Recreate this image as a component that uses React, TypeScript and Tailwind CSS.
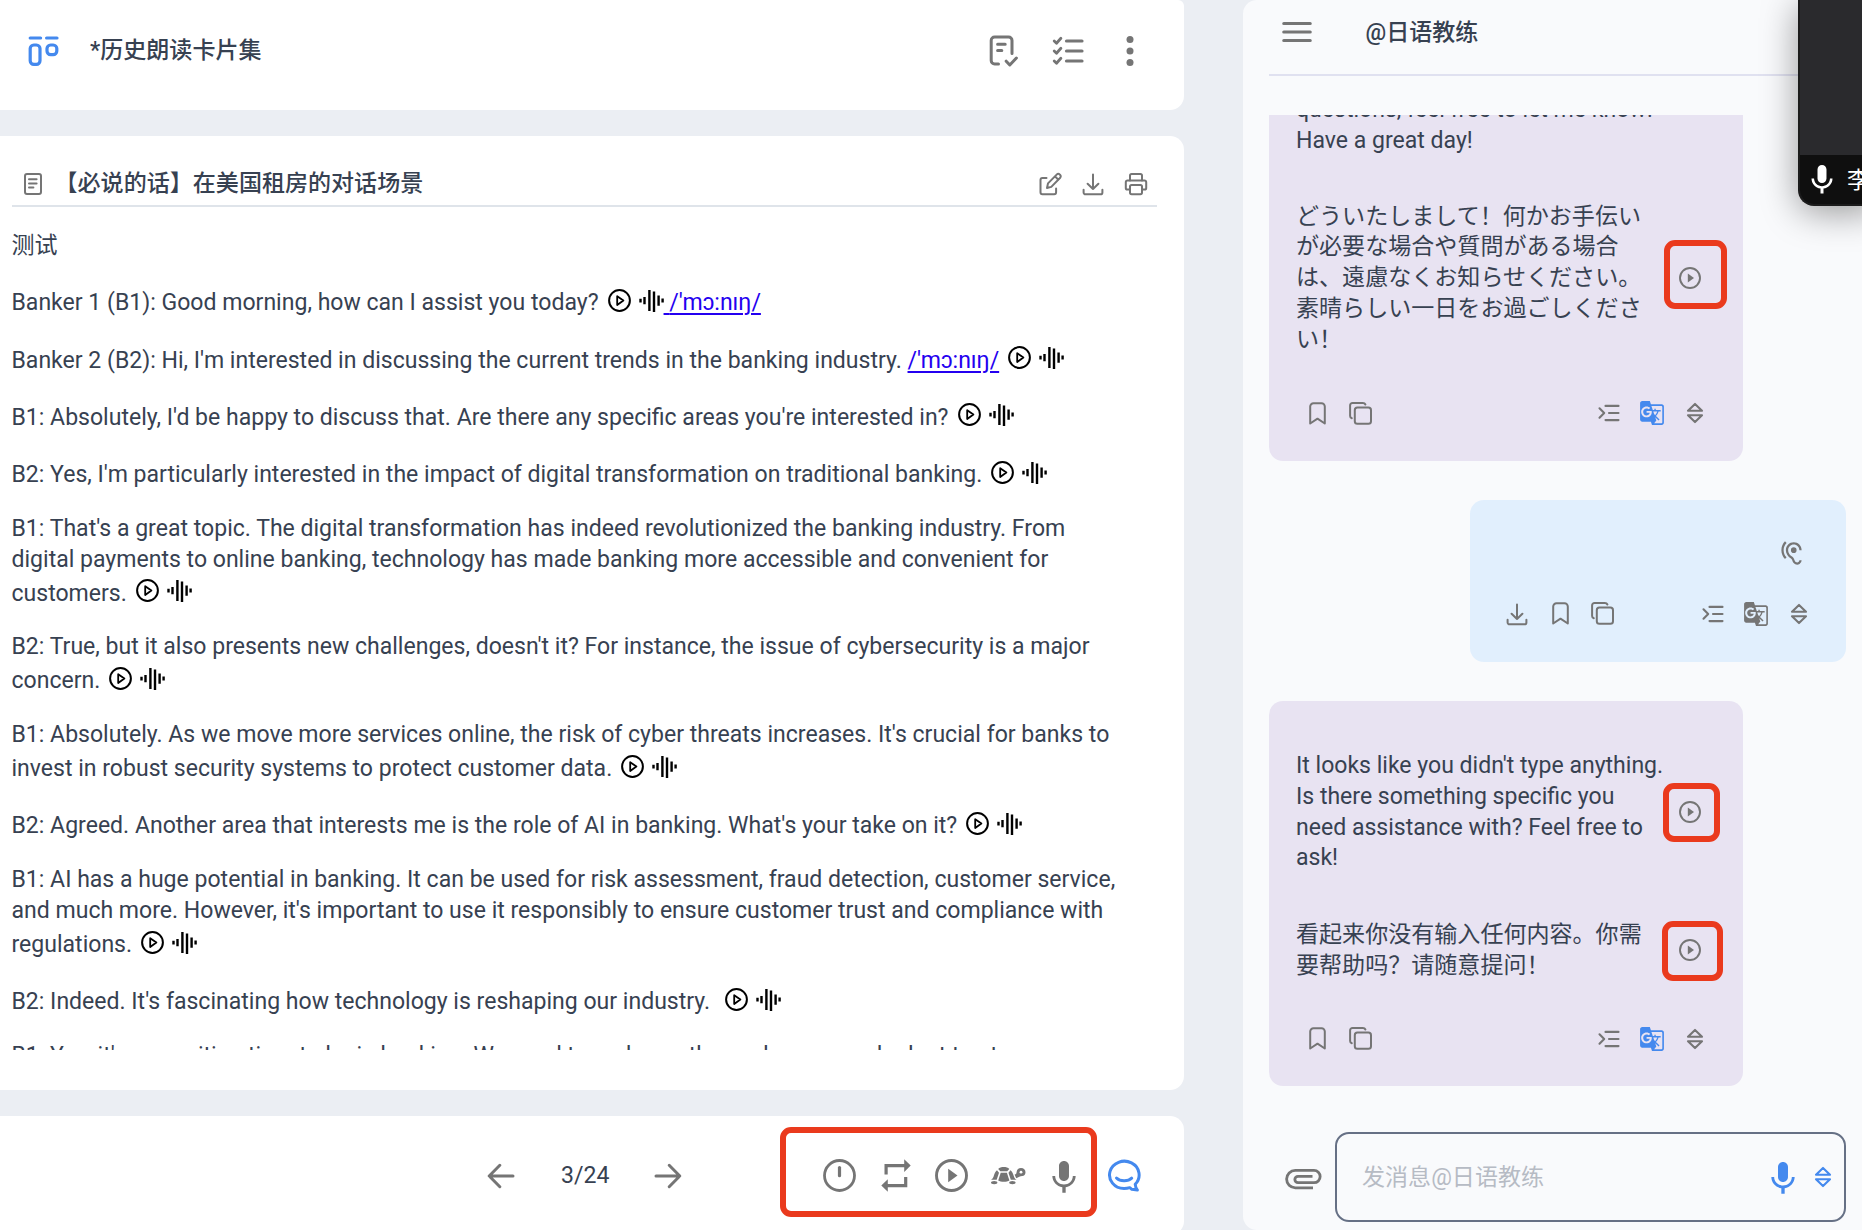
import type { ReactNode } from "react";
import { MdGTranslate, MdHearing, MdKeyboardVoice, MdMic } from "react-icons/md";

type SvgProps = { w: number; h: number; sw?: number; className?: string; children: ReactNode };

function Svg({ w, h, sw = 2, className = "", children }: SvgProps) {
  return (
    <svg
      width={w}
      height={h}
      viewBox={`0 0 ${w} ${h}`}
      fill="none"
      stroke="currentColor"
      strokeWidth={sw}
      strokeLinecap="round"
      strokeLinejoin="round"
      className={"shrink-0 " + className}
    >
      {children}
    </svg>
  );
}

const Board = () => (
  <Svg w={31} h={32} sw={3.2} className="text-[#4489ee]">
    <path d="M2.2 3H12.6M18.6 3h10.4" />
    <rect x="2.200" y="10" width="9.800" height="19.400" rx="3.600" />
    <rect x="19" y="10" width="9.800" height="9.600" rx="3.600" />
  </Svg>
);

const DocCheck = () => (
  <Svg w={30} h={32} sw={3}>
    <path d="M9.5 29H5.6a3.4 3.4 0 0 1-3.400-3.400V5.400A3.400 3.400 0 0 1 5.600 2h14a3.400 3.400 0 0 1 3.400 3.400v13.200" />
    <path d="M8.600 9.200h7.600M8.600 15.600h4.200" />
    <path d="M17.200 26.200l3.600 3.800 6.600-7" />
  </Svg>
);

const Checklist = () => (
  <Svg w={32} h={30} sw={3.2}>
    {[5, 15, 25].map((y) => (
      <g key={y}>
        <path d={`M14.5 ${y}H30`} />
        <path d={`M2.2 ${y}l2.3 2.2 4.4-4.9`} strokeWidth={2.8} />
      </g>
    ))}
  </Svg>
);

const Dots = () => (
  <svg width="8" height="32" viewBox="0 0 8 32" fill="currentColor">
    <circle cx="4" cy="4.4" r="3.5" />
    <circle cx="4" cy="16" r="3.5" />
    <circle cx="4" cy="27.4" r="3.5" />
  </svg>
);

const Doc = () => (
  <Svg w={18} h={22} sw={2}>
    <rect x="1" y="1" width="16" height="20" rx="2" />
    <path d="M5 6.2h7.6M5 10.4h7.6M5 14.6h4.4" />
  </Svg>
);

const Edit = () => (
  <Svg w={24} h={24} sw={2}>
    <path d="M8.500 6H4.400A1.900 1.900 0 0 0 2.500 7.900V20.300a1.900 1.900 0 0 0 1.900 1.900H16.200a1.900 1.900 0 0 0 1.900-1.900V16.500" />
    <path d="M9 16l1-4.600L18.900 2.400a1.900 1.900 0 0 1 2.700 0l.6.6a1.900 1.900 0 0 1 0 2.700L13.300 14.900zM17 4.400l3.400 3.400" />
  </Svg>
);

const Download = () => (
  <Svg w={22} h={24} sw={2}>
    <path d="M11 2.500V17M5.600 11.700L11 17l5.400-5.300M1.600 17.800v2.600a1.900 1.900 0 0 0 1.900 1.900h15a1.900 1.900 0 0 0 1.900-1.900v-2.600" />
  </Svg>
);

const Print = () => (
  <Svg w={24} h={24} sw={2}>
    <path d="M6 8.500V3.600A1.600 1.600 0 0 1 7.600 2h8.800A1.600 1.600 0 0 1 18 3.600V8.500" />
    <path d="M6 17.500H3.400A1.600 1.600 0 0 1 1.800 15.900V10.200A1.600 1.600 0 0 1 3.400 8.600h17.200a1.600 1.600 0 0 1 1.600 1.600v5.700a1.600 1.600 0 0 1-1.600 1.600H18" />
    <rect x="6" y="13" width="12" height="9.200" rx="1.600" />
  </Svg>
);

const PlayOutline = () => (
  <Svg w={23} h={23} sw={2} className="text-black">
    <circle cx="11.500" cy="11.500" r="10.400" />
    <path d="M9.200 7.200l6.200 4.300-6.200 4.500z" strokeWidth={1.800} />
  </Svg>
);

const Wave = () => (
  <Svg w={25} h={23} sw={2.400} className="text-black">
    <path strokeLinecap="butt" d="M1.500 9.800v3.600M5.500 8v7.200M10.400 1v21M15 2.500v20.500M19.600 6.500v10.300M23.600 9.500v4" />
  </Svg>
);

const PlaySolid = ({ size }: { size: number }) => (
  <svg width={size} height={size} viewBox="0 0 33 33" fill="none" stroke="currentColor" strokeWidth={2.900}>
    <circle cx="16.500" cy="16.500" r="15" />
    <path d="M13.200 9.700v13.600l9.300-6.800z" fill="currentColor" stroke="none" />
  </svg>
);

const Timer = () => (
  <Svg w={33} h={33} sw={2.800}>
    <circle cx="16.500" cy="16.500" r="15" />
    <path d="M16.500 8.500v8.200" strokeWidth={3.200} />
  </Svg>
);

const Repeat = () => (
  <svg width="30" height="33" viewBox="0 0 30 33" fill="currentColor">
    <path d="M3.500 5h19.700V0.300l6.500 6.300-6.500 6.300V8.200H6.700v7.300H3.500z" />
    <path d="M26.300 28.200H6.800v4.600L0.300 26.500l6.500-6.300V25h16.300v-7h3.200z" />
  </svg>
);

const Turtle = () => (
  <svg width="36" height="19" viewBox="0 0 36 19" fill="currentColor">
    <path d="M8.200 2.900C10.500.3 17 .3 19.300 2.900L17.200 5.200h-6.900z" />
    <path d="M7 4.200l2 2.600-2.300 7H1c1.700-.8 2.300-2.200 2.900-4.200.6-2.200 1.600-4.100 3.100-5.400z" />
    <path d="M10.700 6.800h6.200l2.500 7.600c-2.500 1.700-8.700 1.700-11.200 0z" />
    <path d="M20.500 4.200c1.500 1.300 2.500 3.200 3.100 5.400.5 1.900 1.200 3.400 2.900 4.200H20.800L18.500 6.800z" />
    <path d="M24.600 8.600c1.600-.3 1.900-1.300 2-2.600C26.900 3.500 28.600 2 31 2c2.800 0 4.500 1.900 4.500 4.300 0 2.200-1.300 3.600-3.300 3.800-2.100.1-3.600 1.500-6 2.100z" />
    <ellipse cx="4.200" cy="16.600" rx="3.200" ry="1.700" />
    <ellipse cx="22.400" cy="16.600" rx="3.200" ry="1.700" />
    <circle cx="31" cy="6.200" r="1.400" fill="white" />
  </svg>
);

const ChatSmile = () => (
  <Svg w={34} h={33} sw={3} className="text-[#4489ee]">
    <path d="M28.200 25.200A14.800 13.700 0 1 0 17 29.600c2.500 0 4-.3 5.800-.9l2 1.600 5.600.8c-1.300-1.300-2-3.500-2.200-5.900z" />
    <path d="M9.500 19c3.500 3.600 11.500 3.800 15.200.2" />
  </Svg>
);

const Arrow = ({ flip = false }: { flip?: boolean }) => (
  <Svg w={28} h={26} sw={3} className={flip ? "rotate-180" : ""}>
    <path d="M26 13H2.500M12.800 2.300L2.200 13l10.600 10.700" />
  </Svg>
);

const Bookmark = () => (
  <Svg w={17} h={23} sw={2}>
    <path d="M1.200 21.500V4.600a3.300 3.300 0 0 1 3.300-3.300h8a3.300 3.300 0 0 1 3.300 3.300v16.900l-7.300-4.800z" />
  </Svg>
);

const Copy = () => (
  <Svg w={23} h={23} sw={2}>
    <rect x="5.800" y="5.600" width="16.200" height="16.200" rx="2.600" />
    <path d="M2.800 16.300C1.600 15.900 1.100 15.300 1.100 14V3.400A2.400 2.400 0 0 1 3.500 1h10.400c1.400 0 2 .4 2.500 1.500" />
  </Svg>
);

const Indent = () => (
  <Svg w={22} h={18} sw={2.100}>
    <path d="M7.500 1.900H20.500M11 9H20.500M7.500 16.100H20.500M1.500 4.300L6.200 9l-4.700 4.700" />
  </Svg>
);

const Sort = () => (
  <Svg w={18} h={22} sw={2.100}>
    <path d="M2 8.700L9 1.900l7 6.800zM2 13.300h14L9 20.100z" />
  </Svg>
);

const Clip = () => (
  <Svg w={37} h={22} sw={2.800}>
    <path
      strokeLinecap="butt"
      d="M28 19.800H10.300A8.700 8.700 0 0 1 10.300 2.400H29a6 6 0 0 1 0 12.300H13a3 3 0 0 1 0-6.300h14.500"
    />
  </Svg>
);

/* A line of the article; "media" lines carry the play and wave buttons. */
function Line({ children, media = false, tall = false }: { children: ReactNode; media?: boolean; tall?: boolean }) {
  return (
    <div className={"flex items-end whitespace-nowrap" + (media || tall ? " h-[34px]" : " h-[30.75px]")}>
      <span className="whitespace-pre">{children}</span>
      {media && <Media />}
    </div>
  );
}

const Media = () => (
  <span className="mb-[7px] ml-[9px] inline-flex items-center gap-[8px]">
    <PlayOutline />
    <Wave />
  </span>
);

const Ipa = ({ lead = "" }: { lead?: string }) => (
  <a className="whitespace-pre text-[#2400f0] underline decoration-[1.7px] underline-offset-[3px]">{lead}/'mɔ:nıŋ/</a>
);

const Para = ({ children }: { children: ReactNode }) => <div className="mb-[23.15px]">{children}</div>;

const Slot = ({ children, w = "w-[42.8px]" }: { children: ReactNode; w?: string }) => (
  <span className={"flex shrink-0 items-center justify-center " + w}>{children}</span>
);

const Tools = ({ blue = true, download = false }: { blue?: boolean; download?: boolean }) => (
  <div className="flex h-6 justify-between text-[#757575]">
    <div className="flex">
      {download && <Slot><Download /></Slot>}
      <Slot><Bookmark /></Slot>
      <Slot><Copy /></Slot>
    </div>
    <div className="flex">
      <Slot><Indent /></Slot>
      <Slot><MdGTranslate size={26} className={blue ? "text-[#4489ee]" : ""} /></Slot>
      <Slot><Sort /></Slot>
    </div>
  </div>
);

const Mark = ({ className }: { className: string }) => (
  <span className={"pointer-events-none absolute rounded-[11px] border-[6px] border-[#ea3a1d] " + className} />
);

const Say = ({ lines, mark }: { lines: string[]; mark: string }) => (
  <div className="flex items-center justify-between pr-[42px]">
    <div className="pt-px">
      {lines.map((t) => (
        <div key={t} className="h-[30.75px] whitespace-nowrap">{t}</div>
      ))}
    </div>
    <span className="relative flex w-[22px] text-[#757575]">
      <PlaySolid size={22} />
      <Mark className={mark} />
    </span>
  </div>
);

export default function App() {
  return (
    <div className="relative flex h-[1230px] w-[1862px] overflow-hidden bg-[#ebeef3] font-['Roboto','Noto_Sans_CJK_SC',sans-serif] text-[23.05px] leading-[30.75px] text-[#374151]">
      <main className="flex h-full w-[1184px] shrink-0 flex-col gap-[26px]">
        <header className="flex h-[110px] shrink-0 items-center rounded-br-[14px] rounded-tr-[6px] bg-white pb-[9px] pl-[28px] text-[#757575]">
          <Board />
          <h1 className="ml-[31px] pt-[2px] font-medium text-[#374151]">*历史朗读卡片集</h1>
          <div className="ml-auto flex items-center pr-[50px]">
            <DocCheck />
            <span className="ml-[33px] flex"><Checklist /></span>
            <span className="ml-[42px] flex"><Dots /></span>
          </div>
        </header>

        <section className="flex h-[954px] shrink-0 flex-col rounded-r-[14px] bg-white pl-[11.5px] pr-[27px]">
          <div className="flex h-[71px] items-center border-b-2 border-[#dfe4ea] pl-[12px] pt-[26px] text-[#757575]">
            <Doc />
            <h2 className="ml-[13px] pt-px font-medium text-[#374151]">【必说的话】在美国租房的对话场景</h2>
            <div className="ml-auto flex items-center gap-[20px] pr-[9px]">
              <Edit />
              <Download />
              <Print />
            </div>
          </div>
          <article className="h-[843px] overflow-hidden pt-[24.3px]">
            <Para><Line>测试</Line></Para>
            <Para>
              <div className="flex">
                <Line media>Banker 1 (B1): Good morning, how can I assist you today?</Line>
                <Line tall><Ipa lead=" " /></Line>
              </div>
            </Para>
            <Para><Line media>Banker 2 (B2): Hi, I'm interested in discussing the current trends in the banking industry. <Ipa /></Line></Para>
            <Para><Line media>B1: Absolutely, I'd be happy to discuss that. Are there any specific areas you're interested in?</Line></Para>
            <Para><Line media>B2: Yes, I'm particularly interested in the impact of digital transformation on traditional banking.</Line></Para>
            <Para>
              <Line>B1: That's a great topic. The digital transformation has indeed revolutionized the banking industry. From</Line>
              <Line>digital payments to online banking, technology has made banking more accessible and convenient for</Line>
              <Line media>customers.</Line>
            </Para>
            <Para>
              <Line>B2: True, but it also presents new challenges, doesn't it? For instance, the issue of cybersecurity is a major</Line>
              <Line media>concern.</Line>
            </Para>
            <Para>
              <Line>B1: Absolutely. As we move more services online, the risk of cyber threats increases. It's crucial for banks to</Line>
              <Line media>invest in robust security systems to protect customer data.</Line>
            </Para>
            <Para><Line media>B2: Agreed. Another area that interests me is the role of AI in banking. What's your take on it?</Line></Para>
            <Para>
              <Line>B1: AI has a huge potential in banking. It can be used for risk assessment, fraud detection, customer service,</Line>
              <Line>and much more. However, it's important to use it responsibly to ensure customer trust and compliance with</Line>
              <Line media>regulations.</Line>
            </Para>
            <Para><Line media>{"B2: Indeed. It's fascinating how technology is reshaping our industry. "}</Line></Para>
            <Para><Line>B1: Yes, it's an exciting time to be in banking. We need to embrace these changes and adapt to stay</Line></Para>
          </article>
        </section>

        <footer className="flex h-[119px] shrink-0 items-center rounded-r-[14px] bg-white pl-[487px] text-[#757575]">
          <Arrow />
          <span className="ml-[46px] w-[48px] pt-[2px] text-center text-[#374151]">3/24</span>
          <span className="ml-[45px] flex"><Arrow flip /></span>
          <div className="relative ml-auto flex w-[317px] items-center pl-[31.5px]">
            <Slot w="w-14"><Timer /></Slot>
            <Slot w="w-14"><Repeat /></Slot>
            <Slot w="w-14"><PlaySolid size={33} /></Slot>
            <Slot w="w-14"><Turtle /></Slot>
            <Slot w="w-14"><MdKeyboardVoice size={40} /></Slot>
            <Mark className="inset-x-0 -top-[29px] h-[90px]" />
          </div>
          <span className="ml-[10px] mr-[43px] flex"><ChatSmile /></span>
        </footer>
      </main>

      <aside className="ml-[59px] flex h-full w-[619px] shrink-0 flex-col rounded-l-[14px] bg-[#f9fafc] pl-[26px] pr-4">
        <div className="-mr-4 flex h-[75.5px] shrink-0 items-center border-b-2 border-[#e0e1f0] pb-[9px] pl-[13px]">
          <Svg w={30} h={22} sw={3.2} className="text-[#757575]">
            <path d="M1.800 2.500h26.400M1.800 11h26.400M1.800 19.500h26.400" />
          </Svg>
          <h2 className="ml-[53.5px] pt-[2px] font-medium">@日语教练</h2>
        </div>

        <div className="mt-[39.5px] flex h-[972px] shrink-0 flex-col overflow-hidden">
          <div className="h-[345.5px] w-[474px] shrink-0 rounded-b-[14px] bg-[#e8e3f2] pl-[27px]">
            <div className="-mt-[20px] mb-[44px]">
              <div className="h-[30.75px]">questions, feel free to let me know!</div>
              <div className="h-[30.75px]">Have a great day!</div>
            </div>
            <Say
              mark="-left-[15px] -top-[27px] h-[69px] w-[63px]"
              lines={["どういたしまして！何かお手伝い", "が必要な場合や質問がある場合", "は、遠慮なくお知らせください。", "素晴らしい一日をお過ごしくださ", "い！"]}
            />
            <div className="mt-[46px] pr-[27px]"><Tools /></div>
          </div>

          <div className="mt-[39.5px] flex h-[161.500px] w-[376px] shrink-0 flex-col self-end rounded-[14px] bg-[#e1effd] px-[26px] pt-[39px]">
            <div className="flex h-7 items-center justify-end pr-[15px] text-[#757575]">
              <MdHearing size={27} />
            </div>
            <div className="mt-[34.5px]"><Tools blue={false} download /></div>
          </div>

          <div className="mt-[39.5px] h-[385px] w-[474px] shrink-0 rounded-[14px] bg-[#e8e3f2] pl-[27px] pt-[49px]">
            <Say
              mark="-left-[16px] -top-[18px] h-[59px] w-[57px]"
              lines={["It looks like you didn't type anything.", "Is there something specific you", "need assistance with? Feel free to", "ask!"]}
            />
            <div className="mt-[45px]">
              <Say mark="-left-[17.5px] -top-[18.5px] h-[60px] w-[61px]" lines={["看起来你没有输入任何内容。你需", "要帮助吗？请随意提问！"]} />
            </div>
            <div className="mt-[45px] pr-[27px]"><Tools /></div>
          </div>
        </div>

        <div className="mt-[45px] flex h-[90px] shrink-0 items-center">
          <span className="ml-[16px] flex w-[50px] pt-1 text-[#757575]"><Clip /></span>
          <div className="flex h-full w-[511px] items-center rounded-[14px] border-2 border-[#667085] pl-[25px] text-[#4489ee]">
            <span className="grow pt-[2px] text-[#b6bbc4]">发消息@日语教练</span>
            <MdKeyboardVoice size={40} />
            <span className="ml-[11px] mr-[12px] flex"><Sort /></span>
          </div>
        </div>
      </aside>

      <div className="absolute -right-4 top-0 flex h-[206px] w-[80px] flex-col overflow-hidden rounded-bl-[16px] border-b-2 border-l-2 border-[#1b1b1b] bg-[#2a2a2d] text-white shadow-[0_6px_36px_rgba(0,0,0,0.4)]">
        <div className="mt-auto flex h-[49px] items-center bg-[#0f0f0f] pl-[4px]">
          <MdMic size={36} />
          <span className="ml-[7px] whitespace-nowrap pt-[3px]">李</span>
        </div>
      </div>
    </div>
  );
}
